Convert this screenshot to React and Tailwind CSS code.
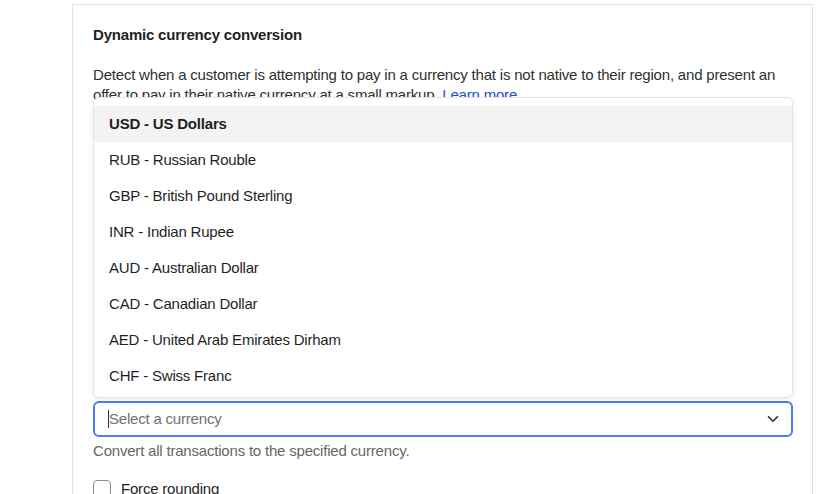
import React, { useState } from "react";
import { ChevronDown } from "lucide-react";

const currencies = [
  "USD - US Dollars",
  "RUB - Russian Rouble",
  "GBP - British Pound Sterling",
  "INR - Indian Rupee",
  "AUD - Australian Dollar",
  "CAD - Canadian Dollar",
  "AED - United Arab Emirates Dirham",
  "CHF - Swiss Franc",
];

function App() {
  const [active] = useState(0);

  return (
    <div
      className="h-[494px] w-[821px] overflow-hidden bg-white text-[#1f1f1f] tracking-[-0.2px]"
      style={{ fontFamily: "'Liberation Sans', Arial, sans-serif" }}
    >
      <div className="ml-[72px] mt-[4px] w-[741px] h-[600px] border-l border-r border-t border-[#e3e3e3] pl-5 pr-[19px] pt-[17px]">
        <h2 className="text-[15px] font-semibold leading-[26px]">Dynamic currency conversion</h2>

        <div className="relative mt-[17px]">
          <p className="text-[15px] leading-[20px] text-[#303030]">
            Detect when a customer is attempting to pay in a currency that is not native to their region, and present an
            offer to pay in their native currency at a small markup.{" "}
            <a className="text-[#1d4ed8]">Learn more</a>
          </p>

          {/* Options list overlay */}
          <div className="absolute left-0 right-0 top-[32px] z-10 rounded-md border border-[#e5e5e5] bg-white pt-2 pb-[3px] shadow-[0_2px_6px_rgba(0,0,0,0.08)]">
            {currencies.map((c, i) => (
              <div
                key={c}
                className={
                  "flex h-9 items-center px-[15px] text-[15px] " +
                  (i === active ? "bg-[#f3f3f3] font-semibold" : "")
                }
              >
                {c}
              </div>
            ))}
          </div>
        </div>

        <div className="mt-[296px] flex h-9 items-center rounded-md border-2 border-[#4b7cf3] pl-[13px] pr-[9px]">
          <span className="h-[18px] w-px bg-[#333]" />
          <span className="flex-1 text-[15px] text-[#707070]">Select a currency</span>
          <ChevronDown className="h-[18px] w-[18px] text-[#333]" strokeWidth={2.2} />
        </div>

        <p className="mt-[4px] text-[15px] leading-[20px] text-[#666]">
          Convert all transactions to the specified currency.
        </p>

        <label className="mt-[17px] flex items-center gap-[10px]">
          <span className="h-[18px] w-[18px] rounded-[4px] border-[1.5px] border-[#8a8a8a]" />
          <span className="text-[15px] font-medium">Force rounding</span>
        </label>
      </div>
    </div>
  );
}

export default App;
